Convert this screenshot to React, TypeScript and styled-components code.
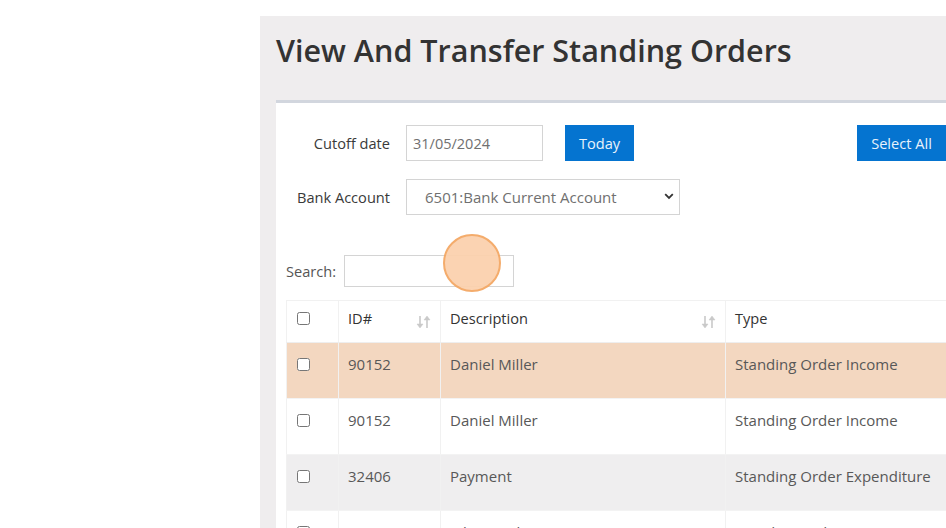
import styled, { createGlobalStyle } from "styled-components";

const GlobalStyle = createGlobalStyle`
  html, body {
    margin: 0;
    padding: 0;
    overflow: hidden;
    background: #ffffff;
    font-family: "Open Sans", "Liberation Sans", sans-serif;
  }
`;

const Page = styled.div`
  width: 946px;
  height: 528px;
  overflow: hidden;
  padding-top: 16px;
  box-sizing: border-box;
`;

const Panel = styled.section`
  margin-left: 260px;
  width: 900px;
  height: 600px;
  background: #efedee;
  padding: 16px 0 0 16px;
  box-sizing: border-box;
`;

const Title = styled.h1`
  margin: 0 0 32px;
  font-size: 30.5px;
  line-height: 36px;
  font-weight: 600;
  color: #333333;
`;

const Card = styled.div`
  position: relative;
  background: #ffffff;
  border-top: 3px solid #d2d6de;
  padding: 22px 0 0 10px;
  min-height: 500px;
`;

const FormRow = styled.div`
  display: flex;
  align-items: center;
  height: 36px;
  margin-bottom: 18px;
`;

const Label = styled.label`
  width: 120px;
  padding-right: 16px;
  box-sizing: border-box;
  text-align: right;
  font-size: 14.6px;
  color: #3a3a3a;
`;

const TextInput = styled.input<{ $w: number; $h?: number }>`
  width: ${(p) => p.$w}px;
  height: ${(p) => p.$h ?? 36}px;
  box-sizing: border-box;
  border: 1px solid #d4d4d4;
  padding: 0 6px;
  font-family: inherit;
  font-size: 14.5px;
  color: #707070;
  outline: none;
`;

const Button = styled.button<{ $gap: number }>`
  margin-left: ${(p) => p.$gap}px;
  height: 36px;
  padding: 0 14px;
  border: none;
  background: #0574d0;
  color: #e8f2fb;
  font-family: inherit;
  font-size: 14.6px;
  cursor: pointer;
  white-space: nowrap;
`;

const WideButton = styled(Button)`
  padding: 0 16px 0 14px;
  min-width: 96px;
  text-align: left;
`;

const SelectWrap = styled.div`
  position: relative;
  width: 274px;
  height: 36px;
`;

const Select = styled.select`
  appearance: none;
  width: 100%;
  height: 100%;
  border: 1px solid #d4d4d4;
  background: #ffffff;
  padding: 0 0 0 18px;
  font-family: inherit;
  font-size: 15px;
  color: #707070;
  outline: none;
`;

const Chevron = styled.svg`
  position: absolute;
  right: 6px;
  top: 14px;
  pointer-events: none;
`;

const SearchRow = styled.div`
  display: flex;
  align-items: center;
  margin-top: 40px;
  gap: 8px;
  font-size: 14.6px;
  color: #555555;
`;

const ClickMark = styled.div`
  position: absolute;
  left: 167px;
  top: 131px;
  width: 54px;
  height: 54px;
  border-radius: 50%;
  background: #fbd1ae;
  border: 2px solid #f4a865;
  opacity: 0.95;
`;

const Table = styled.table`
  margin-top: 13px;
  border-collapse: collapse;
  table-layout: fixed;
  width: 900px;
  font-size: 15px;
`;

const Th = styled.th<{ $w: number }>`
  width: ${(p) => p.$w}px;
  height: 42px;
  box-sizing: border-box;
  padding: 7px 9px 0;
  text-align: left;
  vertical-align: top;
  font-size: 14.6px;
  font-weight: 500;
  color: #333333;
  line-height: 20px;
  border: 1px solid #f1f1f1;
  border-bottom: 1px solid #eeeeee;
`;

const HeadInner = styled.div`
  display: flex;
  justify-content: space-between;
  align-items: flex-start;
`;

const SortIcon = styled.svg`
  margin-top: 7px;
  flex-shrink: 0;
`;

const Row = styled.tr<{ $tone: "peach" | "white" | "gray" }>`
  background: ${(p) =>
    p.$tone === "peach" ? "#f3d7c0" : p.$tone === "gray" ? "#efeeef" : "#ffffff"};
`;

const Td = styled.td`
  height: 56px;
  box-sizing: border-box;
  padding: 11px 9px 0;
  vertical-align: top;
  line-height: 20px;
  color: #585858;
  border-left: 1px solid #f1f1f1;
  border-right: 1px solid #f1f1f1;
  border-bottom: 1px solid #f3f3f3;
  white-space: nowrap;
  overflow: hidden;
`;

const Check = styled.input`
  margin: 4px 0 0 1px;
  width: 13px;
  height: 13px;
`;

const Sort = () => (
  <SortIcon width="15" height="14" viewBox="0 0 15 14">
    <g stroke="#c9c9c9" strokeWidth="1.6" fill="#c9c9c9">
      <line x1="4" y1="1" x2="4" y2="10" />
      <polygon points="1,9 7,9 4,13" strokeWidth="0.5" />
      <line x1="11" y1="4" x2="11" y2="13" />
      <polygon points="8,5 14,5 11,1" strokeWidth="0.5" />
    </g>
  </SortIcon>
);

const rows: { id: string; desc: string; type: string; tone: "peach" | "white" | "gray" }[] = [
  { id: "90152", desc: "Daniel Miller", type: "Standing Order Income", tone: "peach" },
  { id: "90152", desc: "Daniel Miller", type: "Standing Order Income", tone: "white" },
  { id: "32406", desc: "Payment", type: "Standing Order Expenditure", tone: "gray" },
  { id: "30110", desc: "John Stephenson", type: "Standing Order Income", tone: "white" },
];

export default function App() {
  return (
    <Page>
      <GlobalStyle />
      <Panel>
        <Title>View And Transfer Standing Orders</Title>
        <Card>
          <FormRow>
            <Label>Cutoff date</Label>
            <TextInput $w={137} defaultValue="31/05/2024" />
            <Button $gap={22}>Today</Button>
            <WideButton $gap={223}>Select All</WideButton>
          </FormRow>
          <FormRow>
            <Label>Bank Account</Label>
            <SelectWrap>
              <Select defaultValue="6501">
                <option value="6501">6501:Bank Current Account</option>
              </Select>
              <Chevron width="10" height="7" viewBox="0 0 10 7">
                <path d="M1.2 1.2 L5 5 L8.8 1.2" stroke="#333" strokeWidth="1.8" fill="none" />
              </Chevron>
            </SelectWrap>
          </FormRow>
          <SearchRow>
            <span>Search:</span>
            <TextInput $w={170} $h={32} />
          </SearchRow>
          <ClickMark />
          <Table>
            <thead>
              <tr>
                <Th $w={52}>
                  <Check type="checkbox" />
                </Th>
                <Th $w={102}>
                  <HeadInner>
                    ID# <Sort />
                  </HeadInner>
                </Th>
                <Th $w={285}>
                  <HeadInner>
                    Description <Sort />
                  </HeadInner>
                </Th>
                <Th $w={300}>Type</Th>
                <Th $w={161}></Th>
              </tr>
            </thead>
            <tbody>
              {rows.map((r, i) => (
                <Row key={i} $tone={r.tone}>
                  <Td>
                    <Check type="checkbox" />
                  </Td>
                  <Td>{r.id}</Td>
                  <Td>{r.desc}</Td>
                  <Td>{r.type}</Td>
                  <Td></Td>
                </Row>
              ))}
            </tbody>
          </Table>
        </Card>
      </Panel>
    </Page>
  );
}
